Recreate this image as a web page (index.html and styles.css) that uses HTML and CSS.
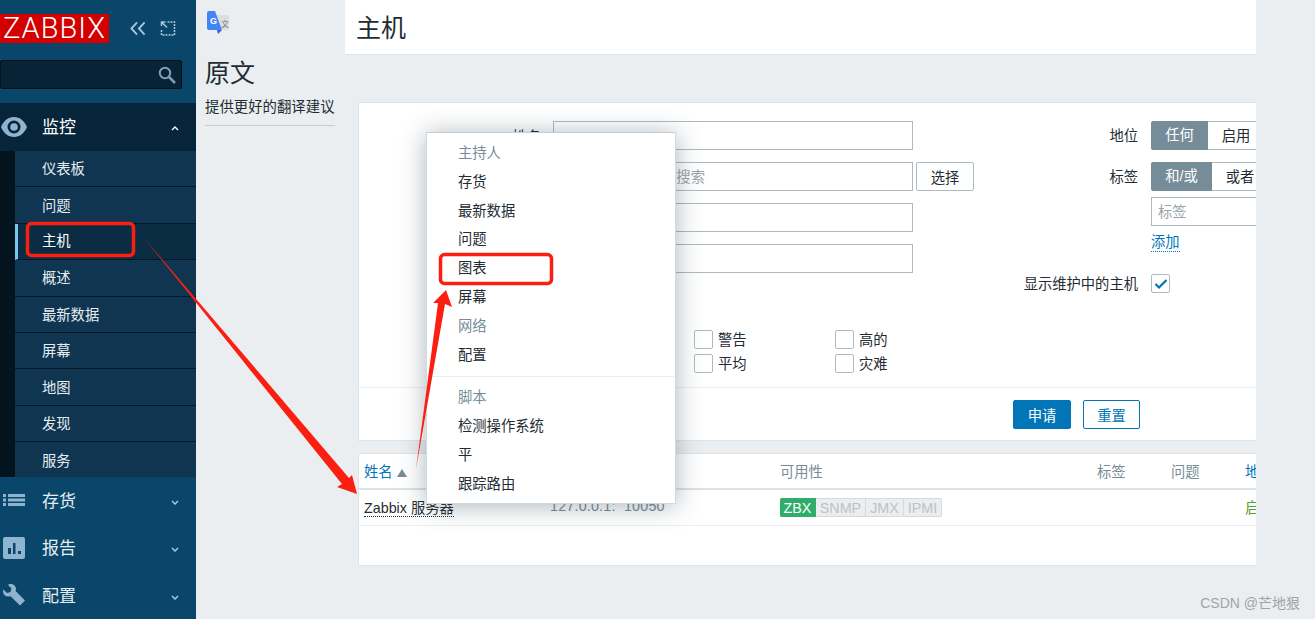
FILE: index.html
```html
<!DOCTYPE html>
<html lang="zh-CN">

<head>
    <meta charset="UTF-8">
    <title>主机</title>
    <link rel="stylesheet" href="styles.css">
</head>

<body>
    <div class="sidebar">
        <div class="side-top">
            <div class="logo-row">
                <div class="logo">ZABBIX</div>
                <svg class="top-icon collapse-icon" viewBox="0 0 17 15"><path d="M7.500 1 1.500 7.500 7.500 14M15.500 1 9.500 7.500 15.500 14" /></svg>
                <svg class="top-icon expand-icon" viewBox="0 0 15 15"><path class="dots" d="M7 1h7v13H1V8" /><path d="M1.500 1.500l5 5M1 5V1h4" /></svg>
            </div>
            <div class="side-search">
                <svg class="search-icon" viewBox="0 0 18 18"><circle cx="7" cy="7" r="5.200" /><path class="search-handle" d="M11 11l6 6" /></svg>
            </div>
        </div>

        <div class="nav-item nav-open">
            <svg class="nav-icon" viewBox="0 0 26 20"><path class="fill" d="M13 0C7 0 2.500 4 0 10c2.500 6 7 10 13 10s10.500-4 13-10C23.500 4 19 0 13 0zm0 16.500a6.500 6.500 0 1 1 0-13 6.500 6.500 0 0 1 0 13z" /><circle class="fill" cx="13" cy="10" r="3.800" /></svg>
            <span class="nav-label">监控</span>
            <svg class="chevron" viewBox="0 0 8 5"><path d="M1 4l3-3 3 3" /></svg>
        </div>
        <ul class="sub-menu">
            <li>仪表板</li>
            <li>问题</li>
            <li class="active">主机</li>
            <li>概述</li>
            <li>最新数据</li>
            <li>屏幕</li>
            <li>地图</li>
            <li>发现</li>
            <li>服务</li>
        </ul>
        <div class="nav-item">
            <svg class="nav-icon" viewBox="0 0 22 12"><path class="fill" d="M0 0h3v3H0zM5 0h17v3H5zM0 4.500h3v3H0zM5 4.500h17v3H5zM0 9h3v3H0zM5 9h17v3H5z" /></svg>
            <span class="nav-label">存货</span>
            <svg class="chevron" viewBox="0 0 8 5"><path d="M1 1l3 3 3-3" /></svg>
        </div>
        <div class="nav-item">
            <svg class="nav-icon" viewBox="0 0 22 22"><path class="fill" fill-rule="evenodd" d="M2 0h18a2 2 0 0 1 2 2v18a2 2 0 0 1-2 2H2a2 2 0 0 1-2-2V2a2 2 0 0 1 2-2zm3 11v6h3v-6zm5-5v11h2.500V6zm5 8v3h3v-3z" /></svg>
            <span class="nav-label">报告</span>
            <svg class="chevron" viewBox="0 0 8 5"><path d="M1 1l3 3 3-3" /></svg>
        </div>
        <div class="nav-item">
            <svg class="nav-icon" viewBox="0 0 22 22"><path class="fill" d="M7 0c3-.5 6 2 6 5 0 .8-.2 1.500-.4 2.100L22 16.500 17 21.500 7.600 12.300C5 13 2.500 12.500 1 10.500 0 9 -.2 7 .3 5.500l3.700 3.500 3.500-1L8.500 4.500 5 1C5.500.5 6.200.1 7 0z" /></svg>
            <span class="nav-label">配置</span>
            <svg class="chevron" viewBox="0 0 8 5"><path d="M1 1l3 3 3-3" /></svg>
        </div>
    </div>

    <div class="translate-col">
        <svg class="translate-icon" viewBox="0 0 22 23">
            <path d="M8 4h14v15H8z" fill="#dcdee0" />
            <path d="M0 2a2 2 0 0 1 2-2h6l7 19H2a2 2 0 0 1-2-2z" fill="#4285f4" />
            <path d="M10 19h5l-4 4z" fill="#3c5fc4" />
            <text x="3" y="13" class="translate-g">G</text>
            <text x="14" y="16" class="translate-zh">文</text>
        </svg>
        <h2 class="translate-title">原文</h2>
        <p class="translate-text">提供更好的翻译建议</p>
    </div>

    <div class="main">
        <div class="page-head">
            <h1>主机</h1>
        </div>

        <div class="card filter-card">
            <div class="filter-cols">
                <div class="filter-left">
                    <div class="form-row"><label>姓名</label><div class="text-input"></div></div>
                    <div class="form-row"><label>主机群组</label><div class="text-input placeholder">在此输入群组进行搜索</div><button class="plain-btn">选择</button></div>
                    <div class="form-row"><label>IP</label><div class="text-input"></div></div>
                    <div class="form-row"><label>DNS</label><div class="text-input"></div></div>
                    <div class="form-row severity-row">
                        <label>严重性</label>
                        <div class="severity-grid">
                            <span class="check-item"><i class="check"></i>未分类</span>
                            <span class="check-item"><i class="check"></i>警告</span>
                            <span class="check-item"><i class="check"></i>高的</span>
                            <span class="check-item"><i class="check"></i>信息</span>
                            <span class="check-item"><i class="check"></i>平均</span>
                            <span class="check-item"><i class="check"></i>灾难</span>
                        </div>
                    </div>
                </div>
                <div class="filter-right">
                    <div class="form-row">
                        <label>地位</label>
                        <div class="segment"><span class="seg-on seg-status">任何</span><span class="seg-off">启用</span></div>
                    </div>
                    <div class="form-row">
                        <label>标签</label>
                        <div class="segment"><span class="seg-on seg-tags">和/或</span><span class="seg-off">或者</span></div>
                    </div>
                    <div class="form-row tag-row">
                        <label></label>
                        <div class="tag-input placeholder">标签</div>
                    </div>
                    <div class="form-row add-row">
                        <label></label>
                        <a class="dotted-link">添加</a>
                    </div>
                    <div class="form-row maint-row">
                        <label>显示维护中的主机</label>
                        <i class="check checked">
                            <svg viewBox="0 0 14 12"><path d="M1.500 6l3.500 3.500L12.500 2" /></svg>
                        </i>
                    </div>
                </div>
            </div>
            <div class="filter-foot">
                <button class="primary-btn">申请</button>
                <button class="outline-btn">重置</button>
            </div>
        </div>

        <div class="card table-card">
            <table class="host-table">
                <thead>
                    <tr>
                        <th class="col-name"><a class="sort-link">姓名<span class="sort-up"></span></a></th>
                        <th class="col-iface">接口</th>
                        <th class="col-avail">可用性</th>
                        <th class="col-tags">标签</th>
                        <th class="col-prob">问题</th>
                        <th class="col-state"><a>地</a></th>
                    </tr>
                </thead>
                <tbody>
                    <tr>
                        <td><a class="host-link">Zabbix 服务器</a></td>
                        <td class="iface-cell">127.0.0.1:&nbsp; 10050</td>
                        <td>
                            <div class="badges"><span class="badge badge-on">ZBX</span><span class="badge">SNMP</span><span class="badge">JMX</span><span class="badge">IPMI</span></div>
                        </td>
                        <td></td>
                        <td></td>
                        <td class="state-ok">启</td>
                    </tr>
                </tbody>
            </table>
        </div>
    </div>

    <div class="popup-menu">
        <ul>
            <li class="menu-head">主持人</li>
            <li>存货</li>
            <li>最新数据</li>
            <li>问题</li>
            <li>图表</li>
            <li>屏幕</li>
            <li class="menu-head">网络</li>
            <li>配置</li>
        </ul>
        <ul class="menu-group">
            <li class="menu-head">脚本</li>
            <li>检测操作系统</li>
            <li>平</li>
            <li>跟踪路由</li>
        </ul>
    </div>

    <!-- hand drawn marks on top of the screenshot -->
    <svg class="marks" viewBox="0 0 1315 619">
        <rect class="mark-box" x="27.500" y="223.500" width="106" height="32" rx="4" />
        <rect class="mark-box" x="440.500" y="254.500" width="111" height="29" rx="4" />
        <path class="mark-arrow" d="M144 238 349 478 352 475 357 494 337 487 342 484z" />
        <path class="mark-arrow" d="M416 469 438 303 433 303 446 290 452 307 445 304z" />
    </svg>

    <div class="watermark">CSDN @芒地狠</div>
</body>

</html>
```

FILE: styles.css
```css
* {
    box-sizing: border-box;
}

html,
body {
    margin: 0;
    height: 619px;
    overflow: hidden;
}

body {
    display: flex;
    background-color: #ebeef0;
    color: #1f2c33;
    font-family: "Liberation Sans", "Noto Sans CJK SC", sans-serif;
    font-size: 14.3px;
}

p,
h1,
h2,
ul {
    margin: 0;
    padding: 0;
}

ul {
    list-style: none;
}

/* left menu */
.sidebar {
    width: 196px;
    height: 619px;
    flex-shrink: 0;
    background-color: #0a466a;
}

.side-top {
    height: 103px;
    padding-top: 14px;
}

.logo-row {
    display: flex;
    align-items: center;
    height: 29px;
}

.logo {
    width: 109px;
    height: 29px;
    background-color: #d40000;
    color: white;
    font-family: "Roboto", sans-serif;
    font-weight: 300;
    font-size: 29px;
    line-height: 29px;
    letter-spacing: 1px;
    text-align: center;
    white-space: nowrap;
}

.top-icon {
    fill: none;
    stroke: #a9c6da;
    stroke-width: 2;
    width: 16px;
    height: 15px;
}

.collapse-icon {
    margin-left: 21px;
}

.expand-icon {
    margin-left: 14px;
    stroke-width: 1.500;
}

.expand-icon .dots {
    stroke-dasharray: 2 1;
}

.side-search {
    display: flex;
    align-items: center;
    justify-content: flex-end;
    width: 182px;
    height: 29px;
    margin-top: 17px;
    padding-right: 5px;
    background-color: #072335;
    border: 1px solid #03131f;
    border-radius: 2px;
}

.search-icon {
    width: 18px;
    height: 18px;
    fill: none;
    stroke: #7f9fb5;
    stroke-width: 2;
}

.search-handle {
    stroke-width: 2.500;
}

.nav-item {
    display: flex;
    align-items: center;
    height: 47.500px;
    color: #e6edf2;
    font-size: 17px;
}

.nav-open {
    height: 48px;
    background-color: #07253a;
    color: white;
}

.nav-icon {
    width: 22px;
    height: 22px;
    margin-left: 3px;
    margin-right: 17px;
    margin-bottom: 1px;
    flex-shrink: 0;
}

.nav-open .nav-icon {
    width: 26px;
    margin-left: 1px;
    margin-right: 15px;
}

.fill {
    fill: #8fb4cf;
}

.nav-label {
    flex: 1;
    padding-bottom: 3px;
}

.chevron {
    width: 8px;
    height: 5px;
    margin-top: 3px;
    margin-right: 17px;
    fill: none;
    stroke: #b9cfdd;
    stroke-width: 1.300;
}

.nav-open .chevron {
    stroke: white;
}

.sub-menu {
    height: 326px;
    overflow: hidden;
    padding-left: 15px;
    background-color: #04141e;
}

.sub-menu li {
    display: flex;
    align-items: center;
    height: 36.400px;
    padding-left: 27px;
    padding-bottom: 2px;
    background-color: #0f3550;
    border-bottom: 1px solid #04182a;
    color: #e6edf2;
}

.sub-menu li:last-child {
    border-bottom: none;
}

.sub-menu li.active {
    padding-left: 24px;
    padding-bottom: 3px;
    background-color: #0b2d43;
    border-left: 3px solid #78c4f5;
    color: white;
}

/* translate extension column */
.translate-col {
    width: 149px;
    flex-shrink: 0;
    padding: 11px 10px 0 9px;
}

.translate-icon {
    display: block;
    width: 22px;
    height: 23px;
    margin-left: 2px;
}

.translate-g {
    fill: white;
    font-size: 9px;
    font-weight: bold;
}

.translate-zh {
    fill: #6d7780;
    font-size: 8px;
}

.translate-title {
    margin-top: 22px;
    font-size: 25px;
    font-weight: normal;
    line-height: 34px;
}

.translate-text {
    margin-top: 7px;
    padding-bottom: 8px;
    border-bottom: 1px solid #c8cccf;
    font-size: 14.400px;
    line-height: 20px;
    white-space: nowrap;
}

/* main part */
.main {
    width: 911px;
    height: 619px;
    flex-shrink: 0;
    overflow: hidden;
}

.page-head {
    display: flex;
    align-items: center;
    height: 55px;
    padding-left: 11px;
    padding-bottom: 2px;
    background-color: white;
    border-bottom: 1px solid #e0e4e7;
}

.page-head h1 {
    font-size: 25px;
    font-weight: normal;
}

.card {
    margin-left: 13px;
    background-color: white;
    border: 1px solid #e0e4e7;
    border-right: none;
}

.filter-card {
    height: 339px;
    margin-top: 47px;
}

.filter-cols {
    display: flex;
    height: 284px;
    padding-top: 18px;
}

.filter-left {
    width: 640px;
    flex-shrink: 0;
    display: flex;
    flex-direction: column;
    gap: 12px;
}

.filter-right {
    flex: 1;
    overflow: hidden;
    display: flex;
    flex-direction: column;
}

.form-row {
    display: flex;
    align-items: center;
    gap: 12px;
    height: 29px;
}

.filter-left label {
    width: 182px;
    flex-shrink: 0;
    text-align: right;
}

.filter-right .form-row {
    gap: 13px;
}

.filter-right label {
    width: 139px;
    flex-shrink: 0;
    padding-bottom: 2px;
    text-align: right;
    white-space: nowrap;
}

.text-input {
    width: 360px;
    height: 29px;
    padding-left: 8px;
    line-height: 28px;
    background-color: white;
    border: 1px solid #acbbc2;
}

.placeholder {
    color: #9aa5ab;
}

.plain-btn {
    width: 58px;
    height: 29px;
    margin-left: -9px;
    padding: 0;
    background-color: white;
    border: 1px solid #acbbc2;
    border-radius: 2px;
    color: #1f2c33;
    font: inherit;
}

.severity-row {
    align-items: flex-start;
    height: 43px;
    margin-top: 45px;
}

.severity-grid {
    display: grid;
    grid-template-columns: repeat(3, 141px);
    grid-auto-rows: 24px;
}

.check-item {
    display: flex;
    align-items: flex-start;
    gap: 5px;
    line-height: 20px;
}

.check {
    display: flex;
    align-items: center;
    justify-content: center;
    width: 19px;
    height: 19px;
    flex-shrink: 0;
    background-color: white;
    border: 1px solid #acbbc2;
    border-radius: 2px;
}

.checked svg {
    width: 14px;
    height: 12px;
    fill: none;
    stroke: #0275b8;
    stroke-width: 2.200;
}

.segment {
    display: flex;
    flex-shrink: 0;
    height: 29px;
    line-height: 28px;
}

.seg-on {
    background-color: #768d99;
    border-radius: 2px 0 0 2px;
    color: white;
    text-align: center;
}

.seg-status {
    width: 57px;
}

.seg-tags {
    width: 61px;
}

.seg-off {
    width: 57px;
    text-align: center;
    border: 1px solid #acbbc2;
    border-left: none;
    flex-shrink: 0;
}

.filter-right .form-row:nth-child(2) {
    margin-top: 12px;
}

.tag-row {
    margin-top: 6px;
}

.tag-input {
    width: 200px;
    height: 29px;
    flex-shrink: 0;
    padding-left: 6px;
    line-height: 29px;
    border: 1px solid #acbbc2;
}

.add-row {
    margin-top: 2px;
}

.dotted-link {
    color: #0275b8;
    line-height: 17px;
    border-bottom: 1px dotted #0275b8;
}

.maint-row {
    height: 19px;
    margin-top: 17px;
}

.filter-right .maint-row label {
    padding-bottom: 0;
    line-height: 20px;
}

.filter-foot {
    display: flex;
    justify-content: flex-start;
    gap: 12px;
    height: 53px;
    padding: 12px 0 0 654px;
    border-top: 1px solid #ebeef0;
}

.primary-btn,
.outline-btn {
    width: 58px;
    height: 29px;
    padding: 0 0 1px;
    border-radius: 2px;
    font: inherit;
}

.primary-btn {
    background-color: #0275b8;
    border: 1px solid #0275b8;
    color: white;
}

.outline-btn {
    width: 57px;
    background-color: white;
    border: 1px solid #0275b8;
    color: #0275b8;
}

/* host list */
.table-card {
    height: 113px;
    margin-top: 12px;
}

.host-table {
    width: 897px;
    table-layout: fixed;
    border-collapse: collapse;
}

.host-table th {
    height: 35px;
    padding: 0 0 2px 5px;
    border-bottom: 2px solid #dde2e5;
    color: #768d99;
    font-weight: normal;
    text-align: left;
    white-space: nowrap;
}

.host-table td {
    height: 36px;
    padding: 0 0 2px 5px;
    border-bottom: 1px solid #ebeef0;
    white-space: nowrap;
}

.host-table a {
    color: #0275b8;
}

.col-name {
    width: 186px;
}

.col-iface {
    width: 230px;
}

.col-avail {
    width: 317px;
}

.col-tags {
    width: 74px;
}

.col-prob {
    width: 74px;
}

.sort-up {
    display: inline-block;
    margin-left: 4px;
    border-left: 5px solid transparent;
    border-right: 5px solid transparent;
    border-bottom: 8px solid #768d99;
}

.host-table .host-link {
    color: #1f2c33;
    border-bottom: 1px dotted #1f2c33;
}

.iface-cell {
    color: #768d99;
    letter-spacing: 0.2px;
}

.badges {
    display: flex;
    width: 162px;
    height: 19px;
    margin-top: 2px;
    line-height: 18px;
}

.badge {
    padding: 0 4px;
    background-color: #ebedee;
    border: 1px solid #d5dadd;
    border-left: none;
    color: #b9c3c9;
}

.badge:last-child {
    border-radius: 0 2px 2px 0;
}

.badge-on {
    padding: 0 3.500px;
    background-color: #2fad6b;
    border-color: #2fad6b;
    border-radius: 2px 0 0 2px;
    color: white;
}

.state-ok {
    color: #59a12a;
}

/* context menu */
.popup-menu {
    position: absolute;
    left: 426px;
    top: 132px;
    width: 250px;
    height: 372px;
    padding: 6px 0;
    background-color: white;
    border: 1px solid #d2dade;
    border-top-color: #c3ced4;
    box-shadow: 0 2px 24px rgba(50, 70, 85, 0.4);
}

.popup-menu li {
    height: 28.800px;
    padding-left: 31px;
    line-height: 28.800px;
}

.menu-head {
    color: #768d99;
}

.menu-group {
    margin-top: 7px;
    padding-top: 6px;
    border-top: 1px solid #ebeef0;
}

/* red arrows and boxes */
.marks {
    position: absolute;
    left: 0;
    top: 0;
    width: 1315px;
    height: 619px;
    pointer-events: none;
}

.mark-box {
    fill: none;
    stroke: #fb1f12;
    stroke-width: 3.500;
}

.mark-arrow {
    fill: #fb1f12;
}

.watermark {
    position: absolute;
    right: 15px;
    top: 592px;
    color: #a0a4a7;
    font-size: 14px;
    white-space: nowrap;
}
```
